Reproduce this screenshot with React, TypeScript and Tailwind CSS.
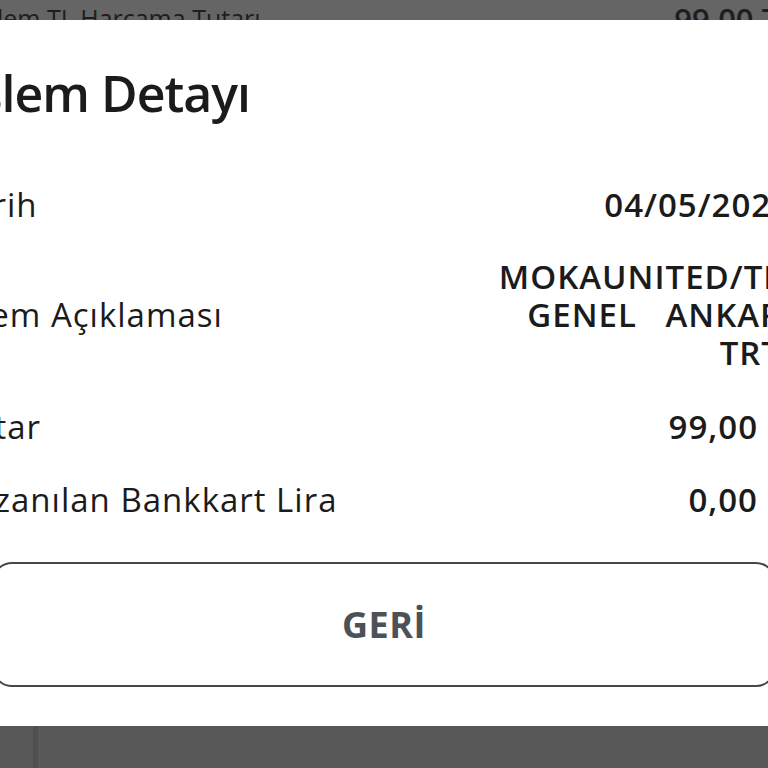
import React from 'react';

const font = { fontFamily: '"Open Sans", "Liberation Sans", sans-serif' };

function App() {
  return (
    <div className="w-[768px] h-[768px] overflow-hidden flex flex-col bg-[#656565]" style={font}>
      {/* background list peeking above the dialog */}
      <div className="h-[20px] overflow-hidden shrink-0">
        <div className="flex justify-between -ml-[22px] w-[880px] pt-[6px] text-[25px] leading-none text-[#1e1e1e]">
          <span>İşlem TL Harcama Tutarı</span>
          <span className="mr-[62px] -mt-[2px] text-[31px] font-semibold">99,00 TL</span>
        </div>
      </div>

      {/* dialog */}
      <div className="flex-1 bg-white overflow-hidden">
        <div className="-ml-[46px] w-[860px] text-[#1b1b1b]">
          <h1 className="ml-[10px] pt-[41px] text-[50px] leading-[64px] font-semibold tracking-[-1px]">
            İşlem Detayı
          </h1>

          <div className="mt-[60px] flex justify-between items-center text-[33px] leading-[40px] tracking-[1px]">
            <span>Tarih</span>
            <span className="font-semibold mr-[23px] whitespace-nowrap">04/05/2022</span>
          </div>

          <div className="mt-[33px] flex justify-between items-center text-[33px] tracking-[1px]">
            <span className="leading-[40px]">İşlem Açıklaması</span>
            <div className="font-semibold mr-[9px] flex flex-col items-end leading-[38px] whitespace-pre">
              <span>MOKAUNITED/TRT</span>
              <span>GENEL   ANKARA</span>
              <span className="mr-[24px]">TRT</span>
            </div>
          </div>

          <div className="mt-[35px] flex justify-between items-center text-[33px] leading-[40px] tracking-[1px]">
            <span>Tutar</span>
            <span className="font-semibold mr-[56px]">99,00</span>
          </div>

          <div className="mt-[33px] flex justify-between items-center text-[33px] leading-[40px] tracking-[1px]">
            <span>Kazanılan Bankkart Lira</span>
            <span className="font-semibold mr-[56px]">0,00</span>
          </div>
        </div>

        <div className="mt-[42px] -ml-[8px] w-[784px]">
          <button className="w-full h-[125px] border-2 border-[#474747] rounded-[20px] bg-white flex items-center justify-center">
            <span className="text-[36px] font-bold text-[#4b5157] tracking-[0.5px]">GERİ</span>
          </button>
        </div>
      </div>

      {/* bottom bar */}
      <div className="h-[42px] shrink-0 bg-[#585858] flex">
        <div className="ml-[33px] w-[5px] bg-[#4f4f4f]" />
      </div>
    </div>
  );
}

export default App;
